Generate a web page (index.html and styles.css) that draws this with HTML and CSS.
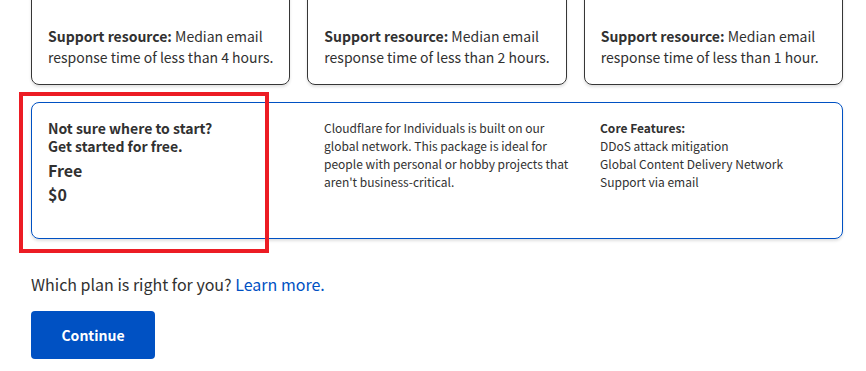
FILE: index.html
```html
<!DOCTYPE html>
<html lang="en">
<head>
  <meta charset="UTF-8">
  <meta name="viewport" content="width=device-width, initial-scale=1.0">
  <title>Choose a plan</title>
  <link rel="stylesheet" href="styles.css">
</head>
<body>
  <div class="page">
    <div class="plans">
      <div class="plan">
        <p><strong>Support resource:</strong> Median email response time of less than 4 hours.</p>
      </div>
      <div class="plan">
        <p><strong>Support resource:</strong> Median email response time of less than 2 hours.</p>
      </div>
      <div class="plan">
        <p><strong>Support resource:</strong> Median email response time of less than 1 hour.</p>
      </div>
    </div>

    <div class="free-card">
      <div class="free-intro">
        <h3>Not sure where to start?<br>Get started for free.</h3>
        <div class="free-name">Free</div>
        <div class="free-price">$0</div>
      </div>
      <p class="free-desc">Cloudflare for Individuals is built on our global network. This package is ideal for people with personal or hobby projects that aren't business-critical.</p>
      <div class="free-features">
        <strong>Core Features:</strong>
        <span>DDoS attack mitigation</span>
        <span>Global Content Delivery Network</span>
        <span>Support via email</span>
      </div>
      <div class="highlight"></div>
    </div>

    <p class="help">Which plan is right for you? <a href="#">Learn more.</a></p>

    <button class="continue">Continue</button>
  </div>
</body>
</html>
```

FILE: styles.css
```css
* { box-sizing: border-box; margin: 0; padding: 0; }
body {
  font-family: 'Noto Sans CJK KR', 'Noto Sans', sans-serif;
  color: #313131;
  background: #fff;
  overflow: hidden;
}
.page {
  width: 812px;
  margin-left: 31px;
  margin-top: -60px;
}
.plans {
  display: grid;
  grid-template-columns: repeat(3, 1fr);
  gap: 17px;
}
.plan {
  min-height: 145px;
  display: flex;
  flex-direction: column;
  justify-content: flex-end;
  border: 1px solid #363636;
  border-radius: 8px;
  padding: 16px 6px 16px 16px;
  box-shadow: 0 2px 3px rgba(0, 0, 0, 0.12);
  font-size: 14px;
  line-height: 21px;
}
.plan strong { font-weight: 700; }

.free-card {
  position: relative;
  margin-top: 17px;
  height: 137px;
  border: 1px solid #0051c3;
  border-radius: 8px;
  box-shadow: 0 2px 3px rgba(0, 0, 0, 0.12);
  padding: 16px;
  display: grid;
  grid-template-columns: 276px 276px 1fr;
}
.free-intro h3 {
  font-size: 14px;
  font-weight: 700;
  line-height: 18px;
}
.free-name {
  margin-top: 3px;
  font-size: 16px;
  font-weight: 700;
  line-height: 24px;
}
.free-price {
  font-size: 16px;
  font-weight: 700;
  line-height: 24px;
}
.free-desc {
  font-size: 12px;
  line-height: 18px;
  padding-right: 20px;
}
.free-features {
  display: flex;
  flex-direction: column;
  font-size: 12px;
  line-height: 18px;
}
.free-features strong { font-weight: 700; }

/* annotation box drawn over the card */
.highlight {
  position: absolute;
  left: -13px;
  top: -11px;
  width: 250px;
  height: 161px;
  border: 4px solid #ec1c24;
}

.help {
  margin-top: 35px;
  font-size: 16px;
  line-height: 20px;
}
.help a {
  color: #0051c3;
  text-decoration: none;
}
.continue {
  margin-top: 17px;
  width: 124px;
  height: 48px;
  border: none;
  border-radius: 4px;
  background: #0051c3;
  color: #fff;
  font-family: inherit;
  font-size: 14px;
  font-weight: 700;
  cursor: pointer;
}
```
